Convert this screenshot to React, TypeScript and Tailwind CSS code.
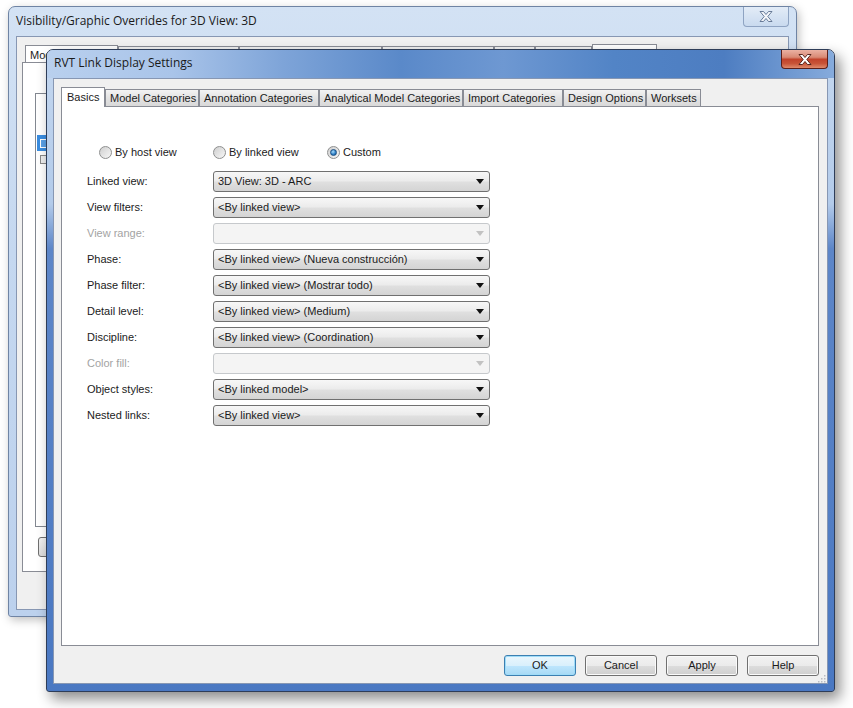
import React from "react";

const ui = "font-['Liberation_Sans',Arial,sans-serif] text-[11px] text-[#1b1b1b]";
const title = "font-['Open_Sans','Noto_Sans',sans-serif] text-[11.5px] text-[#1a1a1a]";

function Arrow({ disabled }: { disabled?: boolean }) {
  return (
    <svg width="8" height="5" viewBox="0 0 8 5">
      <path d="M0 0H8L4 5Z" fill={disabled ? "#c2c2c2" : "#111"} />
    </svg>
  );
}

function Combo({ value, disabled }: { value?: string; disabled?: boolean }) {
  return (
    <div
      className={
        disabled
          ? "h-[21px] w-[277px] rounded-[3px] border border-[#c6c9cc] bg-[#f4f4f4] flex items-center justify-between pl-[4px] pr-[5px]"
          : "h-[21px] w-[277px] rounded-[3px] border border-[#707070] bg-[linear-gradient(#f7f7f7,#ececec_45%,#dfdfdf_55%,#d4d4d4)] flex items-center justify-between pl-[4px] pr-[5px]"
      }
    >
      <span className="whitespace-nowrap">{value}</span>
      <Arrow disabled={disabled} />
    </div>
  );
}

function Radio({ label, checked }: { label: string; checked?: boolean }) {
  return (
    <div className="w-[114px] flex items-center gap-[3px]">
      <div className="w-[13px] h-[13px] rounded-full border border-[#8e8f8f] bg-[linear-gradient(135deg,#cfcfcf,#f7f7f7)] flex items-center justify-center">
        {checked && (
          <div className="w-[7px] h-[7px] rounded-full border border-[#1b4f83] bg-[radial-gradient(circle_at_40%_35%,#a8dcfb,#2a7cc4_60%,#145089)]" />
        )}
      </div>
      <span>{label}</span>
    </div>
  );
}

function Btn({ label, focus }: { label: string; focus?: boolean }) {
  return (
    <div
      className={
        focus
          ? "w-[72px] h-[21px] rounded-[3px] border border-[#3c7fb1] bg-[linear-gradient(#eaf6fd,#d9f0fc_50%,#bee6fd_51%,#a7d9f5)] flex items-center justify-center shadow-[inset_0_0_0_1px_#9fdcf8]"
          : "w-[72px] h-[21px] rounded-[3px] border border-[#707070] bg-[linear-gradient(#f2f2f2,#ebebeb_50%,#dddddd_51%,#cfcfcf)] flex items-center justify-center shadow-[inset_0_0_0_1px_#fafafa]"
      }
    >
      {label}
    </div>
  );
}

function CloseX({ dark }: { dark?: boolean }) {
  return (
    <svg width="14" height="11" viewBox="0 0 14 11">
      <path
        d="M1 0.5H4.5L7 3.5L9.5 0.5H13L8.8 5.5L13 10.5H9.5L7 7.5L4.5 10.5H1L5.2 5.5Z"
        fill={dark ? "#f4f6fa" : "#ffffff"}
        stroke={dark ? "#5b6f8e" : "#4a1711"}
        strokeWidth="0.9"
      />
    </svg>
  );
}

const rows: { label: string; value?: string; disabled?: boolean }[] = [
  { label: "Linked view:", value: "3D View: 3D - ARC" },
  { label: "View filters:", value: "<By linked view>" },
  { label: "View range:", disabled: true },
  { label: "Phase:", value: "<By linked view> (Nueva construcción)" },
  { label: "Phase filter:", value: "<By linked view> (Mostrar todo)" },
  { label: "Detail level:", value: "<By linked view> (Medium)" },
  { label: "Discipline:", value: "<By linked view> (Coordination)" },
  { label: "Color fill:", disabled: true },
  { label: "Object styles:", value: "<By linked model>" },
  { label: "Nested links:", value: "<By linked view>" },
];

const tabs: [string, number][] = [
  ["Model Categories", 94],
  ["Annotation Categories", 120],
  ["Analytical Model Categories", 144],
  ["Import Categories", 100],
  ["Design Options", 83],
  ["Worksets", 55],
];

const backTabs = [121, 143, 112, 41, 57];

function BackWindow() {
  return (
    <div className="absolute left-[8px] top-[6px] w-[789px] h-[611px] rounded-t-[7px] rounded-b-[3px] border border-[#6f84a4] bg-[linear-gradient(#d3e2f4,#c5d8f0_40%,#bcd1ed)] shadow-[2px_3px_10px_rgba(0,0,0,0.25)] flex flex-col">
      <div className="h-[29px] flex items-start">
        <div className={`${title} text-[12px] pl-[7px] pt-[5px]`}>Visibility/Graphic Overrides for 3D View: 3D</div>
        <div className="ml-auto mr-[7px] w-[46px] h-[20px] rounded-b-[4px] border border-t-0 border-[#8ea3c2] bg-[linear-gradient(#e3ecf7,#c9daef)] flex items-center justify-center">
          <CloseX dark />
        </div>
      </div>
      <div className="flex-1 mx-[7px] mb-[6px] border border-[#8797b3] bg-[#f0f0f0] flex flex-col pt-[7px]">
        <div className={`${ui} flex items-end h-[18px] pl-[8px]`}>
          <div className="w-[93px] h-[18px] -mb-px bg-white border border-b-0 border-[#898c95] pl-[4px] pt-[1px]">
            <div className="w-[17px] overflow-hidden whitespace-nowrap">Mod</div>
          </div>
          {backTabs.map((w, i) => (
            <div key={i} style={{ width: w }} className="h-[16px] border border-b-0 border-[#898c95] bg-[linear-gradient(#f2f2f2,#dcdcdc)]" />
          ))}
          <div className="w-[65px] h-[18px] border border-b-0 border-[#898c95] bg-white" />
        </div>
        <div className="ml-[5px] mr-[8px] h-[510px] border border-[#898c95] bg-white pl-[12px] pt-[30px]">
          <div className="h-[434px] w-[720px] border border-[#828790] bg-white pt-[41px] pl-[1px]">
            <div className="h-[16px] w-[300px] bg-[#3a8de0] flex items-center pl-[3px]">
              <div className="w-[9px] h-[9px] border border-[#ffffff] bg-[#5aa0e6]" />
            </div>
            <div className="h-[16px] flex items-center pl-[3px]">
              <div className="w-[9px] h-[9px] border border-[#8a8a8a] bg-[#eeeeee]" />
            </div>
          </div>
          <div className="mt-[10px] ml-[3px] w-[80px] h-[20px] rounded-[3px] border border-[#707070] bg-[linear-gradient(#f2f2f2,#dcdcdc)]" />
        </div>
      </div>
    </div>
  );
}

function FrontWindow() {
  return (
    <div className="absolute left-[46px] top-[49px] w-[789px] h-[643px] rounded-t-[7px] rounded-b-[3px] border border-[#2e3d58] bg-[linear-gradient(#c4d7ef_0%,#b3cbea_24%,#5d86c8_31%,#4a78c2_100%)] shadow-[5px_7px_14px_rgba(0,0,0,0.45)] flex flex-col">
      <div className="h-[28px] flex items-start rounded-t-[6px] bg-[linear-gradient(90deg,#b9d0ee_0%,#a9c4e9_16%,#7ea4d8_30%,#5a89c9_45%,#6e98d2_58%,#5284c6_72%,#4d7dc1_86%,#86abdc_100%)]">
        <div className={`${title} text-[12px] pl-[7px] pt-[4px]`}>RVT Link Display Settings</div>
        <div className="ml-auto mr-[6px] w-[47px] h-[19px] rounded-b-[4px] border border-t-0 border-[#5c1f1a] bg-[linear-gradient(#ebb1a3_0%,#d98a75_40%,#c2432c_52%,#c85438_75%,#df8a6c_100%)] flex items-center justify-center">
          <CloseX />
        </div>
      </div>
      <div className={`${ui} flex-1 mx-[6px] mb-[7px] border border-[#8797b3] bg-[#f0f0f0] flex flex-col pt-[8px]`}>
        <div className="flex items-end h-[19px] pl-[7px]">
          <div className="w-[44px] h-[20px] -mb-px relative bg-white border border-b-0 border-[#898c95] pl-[5px] pt-[1px]">Basics</div>
          {tabs.map(([t, w]) => (
            <div key={t} style={{ width: w }} className="h-[17px] border border-b-0 border-[#898c95] bg-[linear-gradient(#f3f3f3,#e3e3e3_50%,#d9d9d9)] pl-[4px] whitespace-nowrap">
              {t}
            </div>
          ))}
        </div>
        <div className="ml-[7px] w-[758px] h-[540px] border border-[#898c95] bg-white flex flex-col">
          <div className="mt-[39px] pl-[37px] flex items-center h-[13px]">
            <Radio label="By host view" />
            <Radio label="By linked view" />
            <Radio label="Custom" checked />
          </div>
          <div className="mt-[12px] pl-[25px] flex flex-col gap-[5px]">
            {rows.map((r) => (
              <div key={r.label} className="flex items-center h-[21px]">
                <div className={r.disabled ? "w-[126px] text-[#a3a3a3]" : "w-[126px]"}>{r.label}</div>
                <Combo value={r.value} disabled={r.disabled} />
              </div>
            ))}
          </div>
        </div>
        <div className="flex justify-end gap-[9px] pr-[8px] pt-[9px] relative">
          <Btn label="OK" focus />
          <Btn label="Cancel" />
          <Btn label="Apply" />
          <Btn label="Help" />
          <svg className="absolute right-[1px] bottom-[-7px]" width="8" height="8" viewBox="0 0 8 8">
            <g fill="#b9bcc2">
              <rect x="6" y="0" width="1.5" height="1.5" />
              <rect x="3" y="3" width="1.5" height="1.5" />
              <rect x="6" y="3" width="1.5" height="1.5" />
              <rect x="0" y="6" width="1.5" height="1.5" />
              <rect x="3" y="6" width="1.5" height="1.5" />
              <rect x="6" y="6" width="1.5" height="1.5" />
            </g>
          </svg>
        </div>
      </div>
    </div>
  );
}

export default function App() {
  return (
    <div className="relative w-[853px] h-[708px] bg-white overflow-hidden">
      <BackWindow />
      <FrontWindow />
    </div>
  );
}
